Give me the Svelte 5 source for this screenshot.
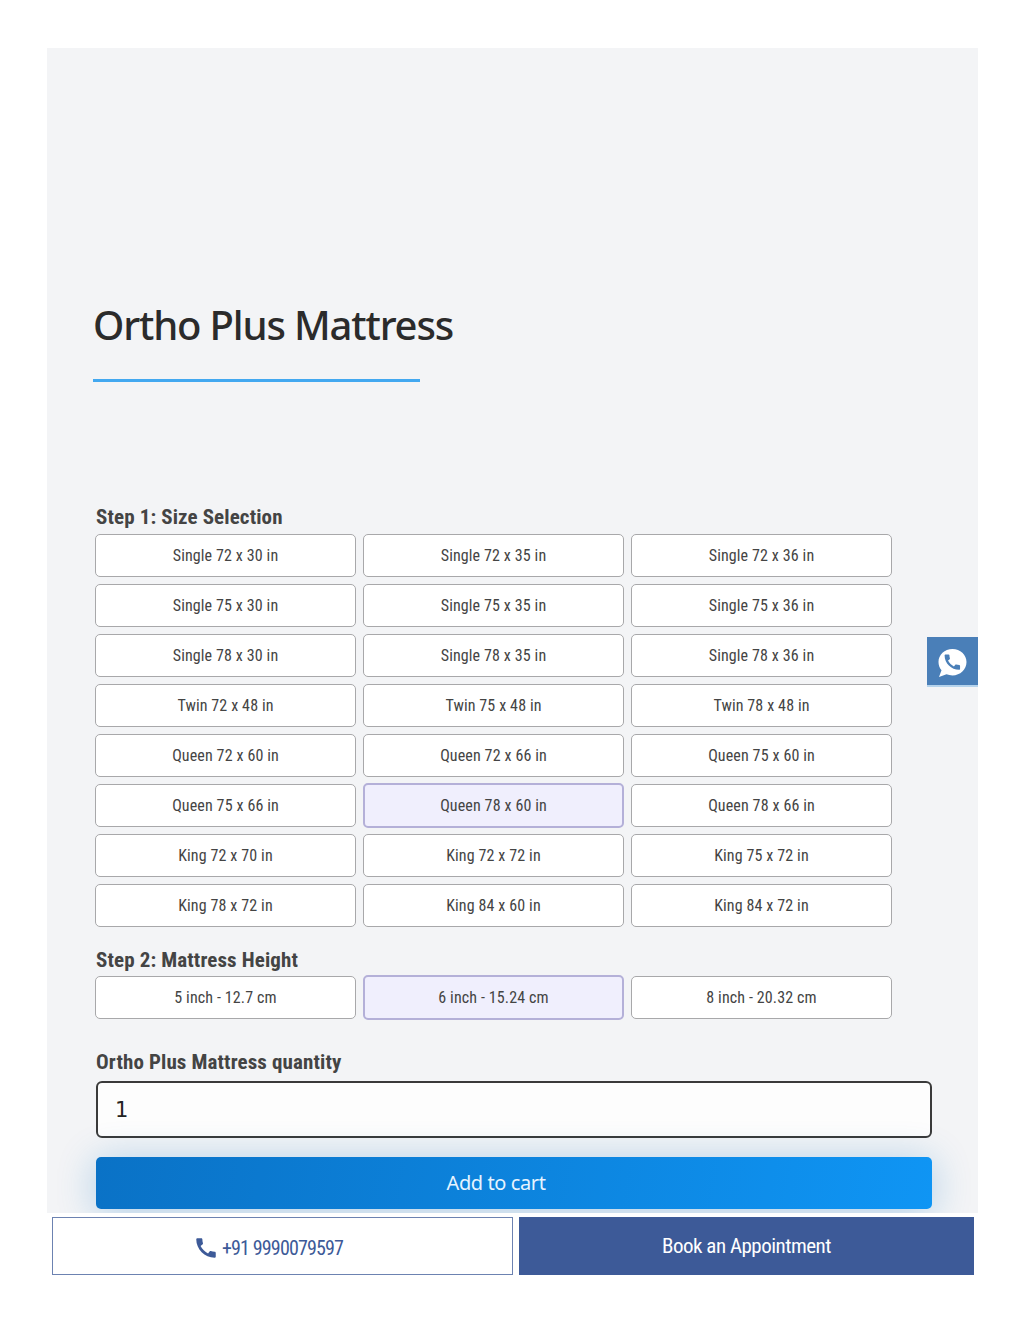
<script lang="ts">
  const sizes = [
    "Single 72 x 30 in", "Single 72 x 35 in", "Single 72 x 36 in",
    "Single 75 x 30 in", "Single 75 x 35 in", "Single 75 x 36 in",
    "Single 78 x 30 in", "Single 78 x 35 in", "Single 78 x 36 in",
    "Twin 72 x 48 in", "Twin 75 x 48 in", "Twin 78 x 48 in",
    "Queen 72 x 60 in", "Queen 72 x 66 in", "Queen 75 x 60 in",
    "Queen 75 x 66 in", "Queen 78 x 60 in", "Queen 78 x 66 in",
    "King 72 x 70 in", "King 72 x 72 in", "King 75 x 72 in",
    "King 78 x 72 in", "King 84 x 60 in", "King 84 x 72 in",
  ];
  const heights = ["5 inch - 12.7 cm", "6 inch - 15.24 cm", "8 inch - 20.32 cm"];

  let size = $state("Queen 78 x 60 in");
  let height = $state("6 inch - 15.24 cm");
  let quantity = $state(1);
</script>

<div class="page">
  <main class="panel">
    <h1>Ortho Plus Mattress</h1>
    <div class="rule"></div>

    <h2 class="step-one">Step 1: Size Selection</h2>
    <div class="options">
      {#each sizes as s}
        <button class="option" class:selected={s === size} onclick={() => (size = s)}>{s}</button>
      {/each}
    </div>

    <h2 class="step-two">Step 2: Mattress Height</h2>
    <div class="options tight">
      {#each heights as h}
        <button class="option" class:selected={h === height} onclick={() => (height = h)}>{h}</button>
      {/each}
    </div>

    <h2 class="step-qty">Ortho Plus Mattress quantity</h2>
    <input class="qty" type="text" bind:value={quantity} />
    <button class="add">Add to cart</button>

    <a class="whatsapp" href="#top" aria-label="WhatsApp">
      <svg viewBox="0 0 30 30" width="30" height="30">
        <path fill="#fff" d="M15.500 1C7.500 1 1.500 6.800 1.500 14c0 3.200 1.100 6 3 8.300L2 29l7.500-2.700c1.800.7 3.800 1.100 6 1.100C23.200 27.400 29.500 21.500 29.500 14 29.500 6.800 23.300 1 15.500 1z" />
        <path fill="#4a7fb8" transform="translate(5 3.800) scale(.86)" d="M20.010 15.380c-1.230 0-2.420-.2-3.530-.56-.35-.12-.74-.03-1.010.24l-1.570 1.970c-2.830-1.350-5.480-3.900-6.890-6.830l1.950-1.660c.27-.28.35-.67.24-1.020-.37-1.110-.56-2.300-.56-3.530 0-.54-.45-.99-.99-.99H4.190C3.650 3 3 3.240 3 3.990 3 13.280 10.730 21 20.010 21c.71 0 .99-.63.99-1.180v-3.450c0-.54-.45-.99-.99-.99z" />
      </svg>
    </a>
  </main>

  <div class="actions">
    <a class="call" href="#top">
      <svg viewBox="0 0 24 24" width="26" height="26">
        <path fill="#3d5a98" d="M20.010 15.380c-1.230 0-2.420-.2-3.530-.56-.35-.12-.74-.03-1.010.24l-1.570 1.970c-2.830-1.350-5.480-3.900-6.890-6.830l1.950-1.660c.27-.28.35-.67.24-1.020-.37-1.110-.56-2.300-.56-3.530 0-.54-.45-.99-.99-.99H4.190C3.650 3 3 3.240 3 3.990 3 13.280 10.730 21 20.010 21c.71 0 .99-.63.99-1.180v-3.450c0-.54-.45-.99-.99-.99z" />
      </svg>
      <span>+91 9990079597</span>
    </a>
    <a class="book" href="#top">Book an Appointment</a>
  </div>
</div>

<style>
  :global(body) {
    background: #fff;
  }
  .page {
    padding: 48px 46px 50px 47px;
    font-family: Roboto, sans-serif;
    font-stretch: 75%;
    color: #444;
  }
  .panel {
    position: relative;
    height: 1165px;
    box-sizing: border-box;
    padding: 253px 46px 0 49px;
    background: #f3f4f6;
    overflow: hidden;
  }
  h1 {
    margin: 0 0 0 -3px;
    font-family: "Noto Sans", sans-serif;
    font-size: 40px;
    font-stretch: normal;
    font-weight: 500;
    line-height: 48px;
    letter-spacing: -1.15px;
    color: #2b2b2b;
  }
  .rule {
    width: 327px;
    height: 3px;
    margin: 30px 0 0 -3px;
    background: #42a8f0;
  }
  h2 {
    margin: 0;
    font-size: 21px;
    font-weight: 700;
    line-height: 24px;
    letter-spacing: 0.12px;
    color: #444;
  }
  .step-one {
    margin-top: 123px;
  }
  .step-two {
    margin-top: 21px;
  }
  .step-qty {
    margin-top: 31px;
  }
  .options {
    display: grid;
    grid-template-columns: repeat(3, 261px);
    gap: 7px;
    margin: 5px 0 0 -1px;
  }
  .tight {
    margin-top: 4px;
  }
  .option {
    height: 43px;
    padding: 0;
    border: 1px solid #a8a8aa;
    border-radius: 5px;
    background: #fff;
    color: #444;
    font-family: Roboto, sans-serif;
    font-stretch: 75%;
    font-size: 16px;
    letter-spacing: 0.12px;
  }
  .selected {
    height: 45px;
    margin: -1px 0;
    border: 2px solid #b4b0d8;
    background: #f0effd;
  }
  .qty {
    display: block;
    box-sizing: border-box;
    width: 836px;
    height: 57px;
    margin-top: 7px;
    padding: 0 17px;
    border: 2px solid #3a3a3a;
    border-radius: 6px;
    background: #fdfdfd;
    color: #222;
    font-family: "DejaVu Sans", sans-serif;
    font-size: 21px;
    outline: none;
  }
  .add {
    display: block;
    width: 836px;
    height: 52px;
    margin-top: 19px;
    padding: 0 36px 2px 0;
    border: none;
    border-radius: 5px;
    background: linear-gradient(100deg, #0a72c6, #0f95f4);
    box-shadow: 0 4px 38px rgba(15, 120, 200, 0.3);
    color: #e6f4ff;
    font-family: "Noto Sans", sans-serif;
    font-size: 20px;
    letter-spacing: -0.4px;
  }
  .whatsapp {
    position: absolute;
    top: 589px;
    right: 0;
    display: flex;
    align-items: center;
    justify-content: center;
    box-sizing: border-box;
    width: 51px;
    height: 50px;
    padding: 4px 1px 0 0;
    border-bottom: 2px solid #b5d3ec;
    background: #4a7fb8;
  }
  .actions {
    display: grid;
    grid-template-columns: 461px 455px;
    gap: 6px;
    margin: 4px 0 0 5px;
  }
  .actions a {
    display: flex;
    align-items: center;
    justify-content: center;
    box-sizing: border-box;
    height: 58px;
    text-decoration: none;
    font-size: 21px;
  }
  .call {
    gap: 3px;
    padding: 3px 29px 0 0;
    border: 1px solid #6c82b1;
    color: #3d5a98;
  }
  .call span {
    font-size: 20px;
    letter-spacing: -0.85px;
  }
  .book {
    background: #3d5a98;
    color: #fff;
    letter-spacing: -0.5px;
  }
</style>
